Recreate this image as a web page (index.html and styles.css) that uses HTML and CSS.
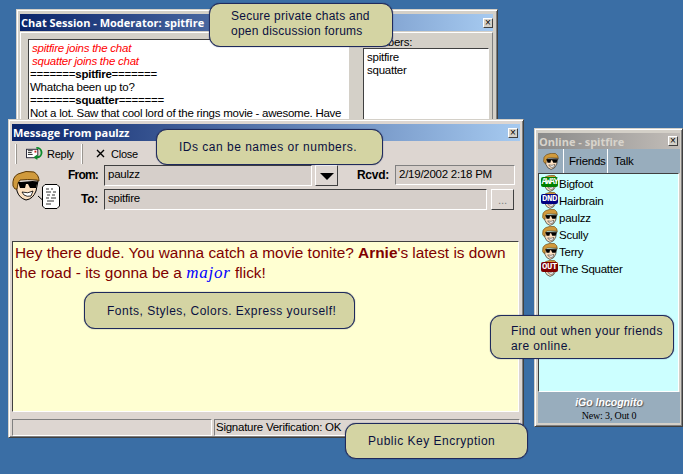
FILE: index.html
```html
<!DOCTYPE html>
<html lang="en">
<head>
  <meta charset="UTF-8" />
  <title>Secure chat</title>
  <link rel="stylesheet" href="styles.css">
</head>
<body>
  <svg class="defs" width="0" height="0">
    <symbol id="face" viewBox="0 0 28 30">
      <path d="M4 12 L5 20 Q7 27 14 29 Q21 28 24 20 L26 10 Z" fill="#fce0c0" stroke="#000"/>
      <path d="M1 15 Q0 6 6 3 Q14 -1 22 1 Q27 4 27 10 L25 9 Q15 8 8 9 L6 12 L5 18 L3 18 Z" fill="#d09a3c" stroke="#5c3a08"/>
      <path d="M6 11 H26 L25 13 L24 17 H18 L16 13 H14 L13 17 H8 Z" fill="#000"/>
      <path d="M10 21 Q16 23 21 20 L19 25 Q15 26 12 24 Z" fill="#fff" stroke="#000" stroke-width="0.8"/>
    </symbol>
    <symbol id="reply" viewBox="0 0 18 16">
      <rect x="0.5" y="3.5" width="12" height="9" fill="#fff" stroke="#223"/>
      <path d="M2 5 H7 M2 7 H6 M2 9 H7" stroke="#222"/>
      <rect x="9" y="5" width="2" height="2" fill="#c22"/>
      <path d="M11 2 A5 5 0 1 1 12 12" fill="none" stroke="#0a8a2a" stroke-width="2"/>
      <path d="M8 12 L12 9 V15 Z" fill="#0a8a2a"/>
    </symbol>
  </svg>

  <section class="win chat-win">
    <div class="title">
      <span>Chat Session - Moderator: spitfire</span>
      <span class="x">&#215;</span>
    </div>
    <div class="chat-body">
      <div class="chat-log">
        <div class="join">spitfire joins the chat</div>
        <div class="join">squatter joins the chat</div>
        <div>=======<b>spitfire</b>=======</div>
        <div>Whatcha been up to?</div>
        <div>=======<b>squatter</b>=======</div>
        <div>Not a lot. Saw that cool lord of the rings movie - awesome. Have</div>
      </div>
      <div class="members">
        <div class="members-label">Members:</div>
        <div class="members-list">
          <div>spitfire</div>
          <div>squatter</div>
        </div>
      </div>
    </div>
  </section>

  <section class="win msg-win">
    <div class="title">
      <span>Message From paulzz</span>
      <span class="x">&#215;</span>
    </div>
    <div class="toolbar">
      <span class="grip"></span>
      <span class="tool tool-reply"><svg width="17" height="15"><use href="#reply"/></svg>Reply</span>
      <span class="grip"></span>
      <span class="tool tool-close">
        <svg width="9" height="9"><path d="M1 1 L8 8 M8 1 L1 8" stroke="#000" stroke-width="1.4"/></svg>Close
      </span>
    </div>
    <div class="head">
      <div class="portrait">
        <svg class="portrait-face" width="28" height="30"><use href="#face"/></svg>
        <svg class="portrait-note" width="18" height="25" viewBox="0 0 18 25">
          <path d="M-4 12 L0.5 16" stroke="#000"/>
          <path d="M3 0.5 H15 L17.5 3 V22 L15 24.5 H3 L0.5 22 V3 Z" fill="#fff" stroke="#000"/>
          <path d="M4 5 H7 M9 5 H11 M4 8 H9 M11 8 H14 M5 11 H8 M10 11 H13 M4 14 H7 M9 14 H14 M5 17 H12 M4 20 H9" stroke="#333"/>
        </svg>
      </div>
      <div class="fields">
        <div class="row">
          <label class="from-label">From:</label>
          <div class="field from">paulzz</div>
          <div class="btn drop"><span class="arrow"></span></div>
          <label class="rcvd">Rcvd:</label>
          <div class="field date">2/19/2002 2:18 PM</div>
        </div>
        <div class="row row-to">
          <label>To:</label>
          <div class="field to">spitfire</div>
          <div class="btn more">...</div>
        </div>
      </div>
    </div>
    <div class="msg-text">
      <div>Hey there dude. You wanna catch a movie tonite? <b>Arnie</b>'s latest is down</div>
      <div>the road - its gonna be a <i class="major">major</i> flick!</div>
    </div>
    <div class="statusbar">
      <div class="panel panel-a"></div>
      <div class="panel panel-b">Signature Verification: OK</div>
    </div>
  </section>

  <section class="win roster">
    <div class="title title-off">
      <span>Online - spitfire</span>
      <span class="x">&#215;</span>
    </div>
    <div class="tabs">
      <span class="tab tab-icon"><svg width="16" height="17"><use href="#face"/></svg></span>
      <span class="tab tab-friends">Friends</span>
      <span class="tab">Talk</span>
    </div>
    <ul class="buddies">
      <li><span class="buddy-ico"><svg width="16" height="17"><use href="#face"/></svg><b class="tag away">AWAY</b></span>Bigfoot</li>
      <li><span class="buddy-ico"><svg width="16" height="17"><use href="#face"/></svg><b class="tag dnd">DND</b></span>Hairbrain</li>
      <li><span class="buddy-ico"><svg width="16" height="17"><use href="#face"/></svg></span>paulzz</li>
      <li><span class="buddy-ico"><svg width="16" height="17"><use href="#face"/></svg></span>Scully</li>
      <li><span class="buddy-ico"><svg width="16" height="17"><use href="#face"/></svg></span>Terry</li>
      <li><span class="buddy-ico"><svg width="16" height="17"><use href="#face"/></svg><b class="tag out">OUT</b></span>The Squatter</li>
    </ul>
    <div class="roster-foot">
      <div class="brand">iGo Incognito</div>
      <div class="counts">New: 3, Out 0</div>
    </div>
  </section>

  <div class="callout c1">Secure private chats and<br>open discussion forums</div>
  <div class="callout c2">IDs can be names or numbers.</div>
  <div class="callout c3">Fonts, Styles, Colors. Express yourself!</div>
  <div class="callout c4">Find out when your friends<br>are online.</div>
  <div class="callout c5">Public Key Encryption</div>
</body>
</html>
```
FILE: styles.css
```css
html, body {
  margin: 0;
  height: 100%;
}
body {
  position: relative;
  width: 683px;
  height: 474px;
  overflow: hidden;
  background-color: #3a6ea5;
  font-family: "Liberation Sans", Arial, sans-serif;
  font-size: 11.5px;
  letter-spacing: -0.25px;
  color: #000;
}
.defs {
  position: absolute;
}

/* windows sit on a desktop, so these are placed by hand */
.win {
  position: absolute;
  box-sizing: border-box;
  padding: 4px;
  background: #d4d0c8;
  border-top: 1px solid #d4d0c8;
  border-left: 1px solid #d4d0c8;
  border-right: 1px solid #404040;
  border-bottom: 1px solid #404040;
  box-shadow: inset 1px 1px 0 #fff, inset -1px -1px 0 #808080;
  display: flex;
  flex-direction: column;
}
.chat-win {
  left: 16px;
  top: 9px;
  width: 482px;
  height: 125px;
  padding-left: 3px;
}
.chat-win .title {
  padding: 0 0 0 1px;
}
.msg-win {
  left: 8px;
  top: 119px;
  width: 516px;
  height: 319px;
  background: #ddd6d1;
  padding: 4px 3px 3px;
}
.roster {
  left: 534px;
  top: 128px;
  width: 149px;
  height: 299px;
  background: #d4d0c8;
  padding: 4px 2px 3px 3px;
}
.title {
  flex: none;
  height: 17px;
  padding: 0 2px 0 1px;
  display: flex;
  align-items: center;
  justify-content: space-between;
  background: linear-gradient(to right, #0a246a, #a6caf0);
  color: #fff;
  font-family: "Open Sans", sans-serif;
  font-weight: bold;
  font-size: 11px;
  letter-spacing: 0;
  white-space: nowrap;
}
.title-off {
  height: 16px;
  background: linear-gradient(to right, #8a8a8a, #c2bdb8);
  color: #d8d4cc;
}
.x {
  width: 10px;
  height: 10px;
  box-sizing: border-box;
  background: #d4d0c8;
  border: 1px solid;
  border-color: #fff #404040 #404040 #fff;
  color: #000;
  font-family: "Liberation Sans", sans-serif;
  font-size: 10px;
  font-weight: normal;
  line-height: 8px;
  text-align: center;
}

/* chat session */
.chat-body {
  flex: 1;
  display: flex;
  margin-top: 1px;
  padding: 6px 3px 0 7px;
  border: 1px solid;
  border-color: #fff #808080 #808080 #fff;
  overflow: hidden;
}
.chat-log {
  width: 321px;
  box-sizing: border-box;
  flex: none;
  padding: 2px 0 0 1px;
  background: #fff;
  border: 1px solid;
  border-color: #404040 #fff #fff #404040;
  line-height: 13px;
  white-space: nowrap;
  overflow: hidden;
}
.join {
  color: #f00;
  font-style: italic;
  padding-left: 2px;
}
.members {
  margin-left: 14px;
  flex: 1;
  display: flex;
  flex-direction: column;
}
.members-label {
  height: 9px;
  line-height: 6px;
}
.members-list {
  flex: 1;
  padding: 2px 3px;
  background: #fff;
  border: 1px solid;
  border-color: #404040 #fff #fff #404040;
  line-height: 13px;
}

/* message window */
.toolbar {
  flex: none;
  height: 23px;
  margin-top: 1px;
  display: flex;
  align-items: center;
  padding-left: 3px;
}
.grip {
  width: 1px;
  height: 20px;
  background: #fff;
  border-right: 1px solid #9a9690;
}
.tool {
  display: flex;
  align-items: center;
  font-size: 11px;
}
.tool-reply {
  margin-left: 9px;
  width: 55px;
  gap: 4px;
}
.tool-close {
  margin-left: 13px;
  gap: 6px;
}
.head {
  flex: none;
  height: 76px;
  display: flex;
}
.portrait {
  position: relative;
  width: 52px;
  flex: none;
}
.portrait-face {
  position: absolute;
  left: 0;
  top: 6px;
}
.portrait-note {
  position: absolute;
  left: 30px;
  top: 19px;
  overflow: visible;
}
.fields {
  flex: 1;
}
.row {
  display: flex;
  align-items: flex-start;
}
.row-to {
  margin-top: 3px;
}
label {
  width: 34px;
  flex: none;
  text-align: right;
  font-size: 12px;
  font-weight: bold;
  margin-right: 6px;
  line-height: 20px;
}
.from-label {
  letter-spacing: -0.8px;
}
.field {
  box-sizing: border-box;
  height: 21px;
  padding-left: 3px;
  line-height: 17px;
  background: #d6cfca;
  border: 1px solid;
  border-color: #404040 #fff #fff #404040;
}
.from {
  width: 208px;
}
.to {
  width: 383px;
}
.date {
  width: 120px;
  height: 20px;
  border-color: #808080 #fff #fff #808080;
}
.btn {
  box-sizing: border-box;
  height: 21px;
  background: #ddd6d1;
  border: 1px solid;
  border-color: #fff #404040 #404040 #fff;
  display: flex;
  align-items: center;
  justify-content: center;
}
.drop {
  width: 23px;
  margin-left: 3px;
}
.arrow {
  border-left: 7px solid transparent;
  border-right: 7px solid transparent;
  border-top: 7px solid #000;
  margin-top: 2px;
}
.rcvd {
  width: 34px;
  margin-left: 17px;
}
.more {
  width: 23px;
  margin-left: 4px;
  color: #808080;
}
.msg-text {
  flex: none;
  box-sizing: border-box;
  height: 171px;
  margin-right: 1px;
  padding: 1px 2px;
  background: #ffffd2;
  border: 1px solid;
  border-color: #404040 #fff #fff #404040;
  color: #800000;
  font-size: 15.4px;
  letter-spacing: 0;
  line-height: 20px;
  white-space: nowrap;
}
.major {
  font-family: "Liberation Serif", serif;
  font-size: 17px;
  letter-spacing: 0.8px;
  color: #00f;
}
.statusbar {
  flex: none;
  display: flex;
  gap: 2px;
  margin-top: 7px;
  height: 17px;
}
.panel {
  box-sizing: border-box;
  border: 1px solid;
  border-color: #808080 #fff #fff #808080;
  line-height: 15px;
  padding-left: 1px;
}
.panel-a {
  width: 200px;
}
.panel-b {
  width: 306px;
}

/* online list */
.tabs {
  flex: none;
  height: 24px;
  display: flex;
  align-items: center;
  background: #98adbd;
}
.tab {
  height: 24px;
  line-height: 24px;
  padding-left: 6px;
}
.tab-icon {
  width: 20px;
  border-right: 1px solid #fff;
  padding-left: 5px;
  display: flex;
  align-items: center;
}
.tab-friends {
  width: 38px;
  padding-left: 5px;
  border-right: 1px solid #fff;
}
.buddies {
  flex: 1;
  list-style: none;
  margin: 0 1px 0 0;
  padding: 1px 0 0 2px;
  background: #ccffff;
  border: 1px solid;
  border-color: #404040 #fff #fff #404040;
}
.buddies li {
  height: 17px;
  display: flex;
  align-items: center;
  gap: 1px;
  font-size: 11.5px;
}
.buddy-ico {
  position: relative;
  width: 17px;
  height: 17px;
  display: flex;
  justify-content: center;
}
.tag {
  position: absolute;
  left: 0;
  top: 2px;
  width: 17px;
  height: 10px;
  border-radius: 2px;
  color: #fff;
  font-family: "Liberation Mono", monospace;
  font-size: 9px;
  line-height: 10px;
  text-align: center;
  letter-spacing: -1.4px;
}
.away {
  background: #008000;
}
.dnd {
  background: #000080;
  letter-spacing: -0.4px;
}
.out {
  background: #800000;
  letter-spacing: -0.4px;
}
.roster-foot {
  flex: none;
  height: 31px;
  background: #98adbd;
  text-align: center;
}
.brand {
  margin-top: 3px;
  font-size: 10.5px;
  font-weight: bold;
  font-style: italic;
  letter-spacing: 0;
  line-height: 14px;
  color: #fff;
  text-shadow: 1px 1px 1px #555;
}
.counts {
  font-family: "Liberation Serif", serif;
  font-size: 10px;
  letter-spacing: -0.15px;
  line-height: 14px;
}

/* annotation bubbles over the screenshot */
.callout {
  position: absolute;
  box-sizing: border-box;
  background: #d4d4a3;
  border: 1px solid #1f2a5c;
  box-shadow: 0 0 1px #1f2a5c;
  border-radius: 11px;
  color: #0a1040;
  font-size: 12px;
  letter-spacing: 0.5px;
  line-height: 15px;
  white-space: nowrap;
}
.c1 {
  left: 209px;
  top: 3px;
  width: 184px;
  height: 44px;
  padding: 5px 0 0 21px;
  letter-spacing: 0.25px;
}
.c2 {
  left: 156px;
  top: 129px;
  width: 227px;
  height: 36px;
  padding: 10px 0 0 22px;
}
.c3 {
  left: 84px;
  top: 292px;
  width: 271px;
  height: 37px;
  padding: 11px 0 0 22px;
}
.c4 {
  left: 490px;
  top: 315px;
  width: 184px;
  height: 44px;
  padding: 8px 0 0 20px;
  letter-spacing: 0.4px;
}
.c5 {
  left: 345px;
  top: 423px;
  width: 183px;
  height: 36px;
  padding: 10px 0 0 22px;
}
```
